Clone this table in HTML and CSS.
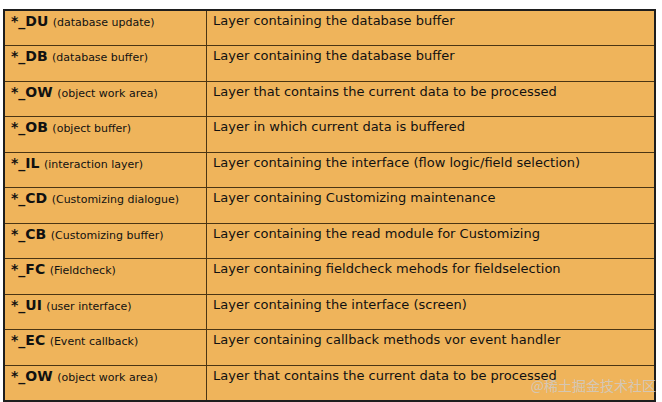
FILE: index.html
```html
<!DOCTYPE html>
<html>
<head>
<meta charset="utf-8">
<link rel="stylesheet" href="styles.css">
</head>
<body>
<div class="page">
<table class="layers">
<tr><td class="key"><b>*_DU</b> <span class="note">(database update)</span></td><td class="desc">Layer containing the database buffer</td></tr>
<tr><td class="key"><b>*_DB</b> <span class="note">(database buffer)</span></td><td class="desc">Layer containing the database buffer</td></tr>
<tr><td class="key"><b>*_OW</b> <span class="note">(object work area)</span></td><td class="desc">Layer that contains the current data to be processed</td></tr>
<tr><td class="key"><b>*_OB</b> <span class="note">(object buffer)</span></td><td class="desc">Layer in which current data is buffered</td></tr>
<tr><td class="key"><b>*_IL</b> <span class="note">(interaction layer)</span></td><td class="desc">Layer containing the interface (flow logic/field selection)</td></tr>
<tr><td class="key"><b>*_CD</b> <span class="note">(Customizing dialogue)</span></td><td class="desc">Layer containing Customizing maintenance</td></tr>
<tr><td class="key"><b>*_CB</b> <span class="note">(Customizing buffer)</span></td><td class="desc">Layer containing the read module for Customizing</td></tr>
<tr><td class="key"><b>*_FC</b> <span class="note">(Fieldcheck)</span></td><td class="desc">Layer containing fieldcheck mehods for fieldselection</td></tr>
<tr><td class="key"><b>*_UI</b> <span class="note">(user interface)</span></td><td class="desc">Layer containing the interface (screen)</td></tr>
<tr><td class="key"><b>*_EC</b> <span class="note">(Event callback)</span></td><td class="desc">Layer containing callback methods vor event handler</td></tr>
<tr><td class="key"><b>*_OW</b> <span class="note">(object work area)</span></td><td class="desc">Layer that contains the current data to be processed</td></tr>
</table>
<div class="watermark">@稀土掘金技术社区</div>
</div>
</body>
</html>
```
FILE: styles.css
```css
html, body {
  margin: 0;
  padding: 0;
  background: #ffffff;
}
.page {
  position: relative;
  width: 662px;
  height: 402px;
  padding: 9px 0 0 3px;
  box-sizing: border-box;
}
.layers {
  border-collapse: collapse;
  border: 2px solid #1e1e1e;
  background: #efb45b;
  width: 653px;
  font-family: "DejaVu Sans", sans-serif;
  color: #111;
  table-layout: fixed;
}
.layers tr {
  height: 35.5px;
}
.layers td {
  border: 1px solid #4a3514;
  vertical-align: top;
  padding: 1px 6px 0 6px;
  font-size: 13px;
  line-height: 18px;
  white-space: nowrap;
  overflow: hidden;
}
.layers td.key {
  width: 189px;
  font-size: 14px;
}
.key b {
  font-weight: bold;
}
.note {
  font-size: 11px;
}
.watermark {
  position: absolute;
  right: 6px;
  bottom: 7px;
  font-family: "Noto Sans CJK SC", sans-serif;
  font-size: 14px;
  color: rgba(205, 205, 205, 0.8);
}
```
